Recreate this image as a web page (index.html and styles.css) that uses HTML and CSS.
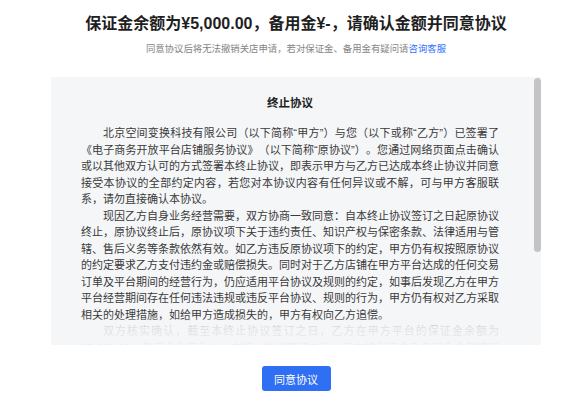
FILE: index.html
```html
<!DOCTYPE html>
<html lang="zh-CN">
<head>
<meta charset="utf-8">
<title>终止协议</title>
<link rel="stylesheet" href="styles.css">
</head>
<body>
<div class="page">
  <h1 class="title">保证金余额为¥5,000.00，备用金¥-，请确认金额并同意协议</h1>
  <p class="sub">同意协议后将无法撤销关店申请，若对保证金、备用金有疑问请<a class="link" href="#">咨询客服</a></p>
  <div class="card">
    <div class="scroll">
      <h2 class="doc-title">终止协议</h2>
      <p class="para">北京空间变换科技有限公司（以下简称“甲方”）与您（以下或称“乙方”）已签署了《电子商务开放平台店铺服务协议》（以下简称“原协议”）。您通过网络页面点击确认或以其他双方认可的方式签署本终止协议，即表示甲方与乙方已达成本终止协议并同意接受本协议的全部约定内容，若您对本协议内容有任何异议或不解，可与甲方客服联系，请勿直接确认本协议。</p>
      <p class="para">现因乙方自身业务经营需要，双方协商一致同意：自本终止协议签订之日起原协议终止，原协议终止后，原协议项下关于违约责任、知识产权与保密条款、法律适用与管辖、售后义务等条款依然有效。如乙方违反原协议项下的约定，甲方仍有权按照原协议的约定要求乙方支付违约金或赔偿损失。同时对于乙方店铺在甲方平台达成的任何交易订单及平台期间的经营行为，仍应适用平台协议及规则的约定，如事后发现乙方在甲方平台经营期间存在任何违法违规或违反平台协议、规则的行为，甲方仍有权对乙方采取相关的处理措施，如给甲方造成损失的，甲方有权向乙方追偿。</p>
      <p class="para">双方核实确认，截至本终止协议签订之日，乙方在甲方平台的保证金余额为¥5,000.00，备用金余额为¥-。本终止协议签订之后，乙方将保证金及备用金余额按原协议约定予以结算。</p>
    </div>
    <div class="fade"></div>
    <div class="thumb"></div>
  </div>
  <button class="btn" type="button">同意协议</button>
</div>
</body>
</html>
```
FILE: styles.css
```css
html, body {
  margin: 0;
  padding: 0;
  background: #ffffff;
}
body {
  font-family: "Liberation Sans", "Noto Sans CJK SC", sans-serif;
  color: #333333;
  text-spacing-trim: space-all;
}
.page {
  padding-left: 16px;
  display: flex;
  flex-direction: column;
  align-items: center;
}
.title {
  margin: 13px 0 0;
  font-size: 16px;
  line-height: 22px;
  font-weight: 700;
  color: #1f1f1f;
}
.sub {
  margin: 7px 0 0;
  font-size: 9.4px;
  line-height: 14px;
  color: #858585;
}
.link {
  color: #3370ff;
  text-decoration: none;
}
.card {
  position: relative;
  margin-top: 21px;
  width: 490px;
  height: 268px;
  background: #f5f6f8;
  overflow: hidden;
}
.scroll {
  padding: 18px 42px 0 30px;
}
.doc-title {
  margin: 0;
  text-align: center;
  font-size: 11.5px;
  line-height: 16px;
  font-weight: 700;
  color: #222222;
}
.para {
  margin: 0;
  font-size: 11px;
  line-height: 16.5px;
  text-indent: 2em;
  color: #3a3a3a;
  text-align: justify;
  text-spacing-trim: space-all;
}
.doc-title + .para {
  margin-top: 14px;
}
.fade {
  position: absolute;
  left: 0;
  right: 0;
  bottom: 0;
  height: 28px;
  background: linear-gradient(to bottom, rgba(245,246,248,0) 0%, rgba(245,246,248,0.88) 35%, rgba(245,246,248,0.96) 100%);
}
.thumb {
  position: absolute;
  top: 1px;
  right: 0;
  width: 7px;
  height: 174px;
  border-radius: 4px;
  background: #c4c4c6;
}
.btn {
  margin-top: 21px;
  width: 69px;
  height: 25px;
  border: none;
  border-radius: 3px;
  background: #2f6ff3;
  color: #ffffff;
  font-family: "Liberation Sans", "Noto Sans CJK SC", sans-serif;
  font-size: 11px;
  padding: 0;
  cursor: pointer;
}
```
